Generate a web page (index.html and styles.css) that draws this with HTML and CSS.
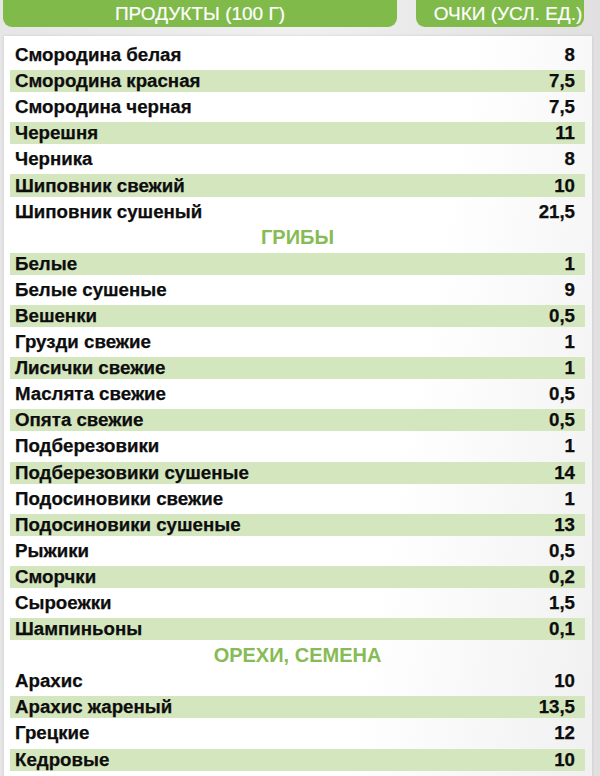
FILE: index.html
```html
<!DOCTYPE html>
<html lang="ru">
<head>
<meta charset="utf-8">
<link rel="stylesheet" href="styles.css">
</head>
<body>
<div class="head">
  <div class="hbar hbar-left">ПРОДУКТЫ (100 Г)</div>
  <div class="hbar hbar-right">ОЧКИ (УСЛ. ЕД.)</div>
</div>
<div class="panel">
  <div class="row"><span>Смородина белая</span><span>8</span></div>
  <div class="row alt"><span>Смородина красная</span><span>7,5</span></div>
  <div class="row"><span>Смородина черная</span><span>7,5</span></div>
  <div class="row alt"><span>Черешня</span><span>11</span></div>
  <div class="row"><span>Черника</span><span>8</span></div>
  <div class="row alt"><span>Шиповник свежий</span><span>10</span></div>
  <div class="row"><span>Шиповник сушеный</span><span>21,5</span></div>
  <div class="section">ГРИБЫ</div>
  <div class="row alt"><span>Белые</span><span>1</span></div>
  <div class="row"><span>Белые сушеные</span><span>9</span></div>
  <div class="row alt"><span>Вешенки</span><span>0,5</span></div>
  <div class="row"><span>Грузди свежие</span><span>1</span></div>
  <div class="row alt"><span>Лисички свежие</span><span>1</span></div>
  <div class="row"><span>Маслята свежие</span><span>0,5</span></div>
  <div class="row alt"><span>Опята свежие</span><span>0,5</span></div>
  <div class="row"><span>Подберезовики</span><span>1</span></div>
  <div class="row alt"><span>Подберезовики сушеные</span><span>14</span></div>
  <div class="row"><span>Подосиновики свежие</span><span>1</span></div>
  <div class="row alt"><span>Подосиновики сушеные</span><span>13</span></div>
  <div class="row"><span>Рыжики</span><span>0,5</span></div>
  <div class="row alt"><span>Сморчки</span><span>0,2</span></div>
  <div class="row"><span>Сыроежки</span><span>1,5</span></div>
  <div class="row alt"><span>Шампиньоны</span><span>0,1</span></div>
  <div class="section">ОРЕХИ, СЕМЕНА</div>
  <div class="row"><span>Арахис</span><span>10</span></div>
  <div class="row alt"><span>Арахис жареный</span><span>13,5</span></div>
  <div class="row"><span>Грецкие</span><span>12</span></div>
  <div class="row alt"><span>Кедровые</span><span>10</span></div>
</div>
</body>
</html>
```
FILE: styles.css
```css
html, body {
  margin: 0;
  padding: 0;
}
body {
  width: 600px;
  height: 776px;
  overflow: hidden;
  background: linear-gradient(90deg, #e6e6e6 0%, #f0f0f0 50%, #e0e0e0 100%);
  font-family: "Liberation Sans", Arial, sans-serif;
}
.head {
  display: flex;
  gap: 19px;
  padding-left: 3px;
  height: 27px;
}
.hbar {
  background: #7fba4b;
  color: #fff;
  border-radius: 0 0 9px 9px;
  display: flex;
  align-items: center;
  justify-content: center;
  font-family: "Liberation Sans", Arial, sans-serif;
  font-size: 19px;
  -webkit-text-stroke: 0.2px #fff;
  padding-top: 1px;
  box-sizing: border-box;
}
.hbar-left { width: 394px; }
.hbar-right { width: 168px; padding-left: 16px; }
.panel {
  margin: 9px 0 0 4px;
  width: 588px;
  box-sizing: border-box;
  padding: 6px 7px 0 6px;
  background: linear-gradient(100deg, #ffffff 0%, #ffffff 65%, #f0f0f0 100%);
  box-shadow: 0 0 3px rgba(0,0,0,0.12);
  height: 760px;
}
.row {
  height: 26.1px;
  box-sizing: border-box;
  padding: 2px 0;
  display: flex;
  font-weight: bold;
  font-size: 18.7px;
  color: #0d0d0d;
  -webkit-text-stroke: 0.25px #0d0d0d;
}
.row span {
  display: flex;
  align-items: center;
}
.row > span:first-child { flex: 1; padding-left: 5px; }
.row > span:last-child { padding-right: 10px; }
.row.alt {
  background: #d4e6bd;
  background-clip: content-box;
}
.section {
  height: 26.1px;
  display: flex;
  align-items: center;
  justify-content: center;
  font-weight: bold;
  font-size: 20px;
  color: #86bb55;
}
```
